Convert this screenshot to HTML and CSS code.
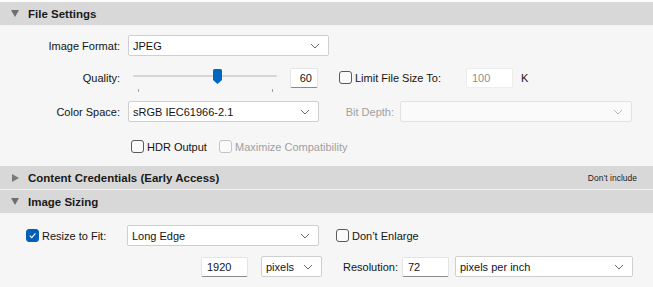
FILE: index.html
```html
<!DOCTYPE html>
<html>
<head>
<meta charset="utf-8">
<link rel="stylesheet" href="styles.css">
</head>
<body>
<div class="panel">
  <div class="hdr first"><span class="tri down"></span><span class="htitle">File Settings</span></div>
  <div class="sec sec1">
    <div class="row r1">
      <span class="lbl">Image Format:</span>
      <div class="sel w-fmt"><span>JPEG</span><svg class="chev" viewBox="0 0 10 6"><path d="M1 1 L5 5 L9 1" /></svg></div>
    </div>
    <div class="row r2">
      <span class="lbl">Quality:</span>
      <div class="slider">
        <div class="track"></div>
        <svg class="thumb" viewBox="0 0 9 15"><path d="M1.5 0 H7.5 Q9 0 9 1.5 V11 L4.5 15 L0 11 V1.5 Q0 0 1.5 0 Z"/></svg>
        <div class="tick t1"></div>
        <div class="tick t2"></div>
      </div>
      <div class="num q">60</div>
      <span class="cb"></span>
      <span class="txt lim">Limit File Size To:</span>
      <div class="num dis sz">100</div>
      <span class="txt k">K</span>
    </div>
    <div class="row r3">
      <span class="lbl">Color Space:</span>
      <div class="sel w-cs"><span>sRGB IEC61966-2.1</span><svg class="chev" viewBox="0 0 10 6"><path d="M1 1 L5 5 L9 1" /></svg></div>
      <span class="txt dim bd">Bit Depth:</span>
      <div class="sel dis w-bd"><span></span><svg class="chev" viewBox="0 0 10 6"><path d="M1 1 L5 5 L9 1" /></svg></div>
    </div>
    <div class="row r4">
      <span class="cb hdrcb"></span>
      <span class="txt hdrt">HDR Output</span>
      <span class="cb dcb"></span>
      <span class="txt dim">Maximize Compatibility</span>
    </div>
  </div>
  <div class="hdr"><span class="tri right"></span><span class="htitle">Content Credentials (Early Access)</span><span class="hnote">Don’t include</span></div>
  <div class="hdr"><span class="tri down"></span><span class="htitle">Image Sizing</span></div>
  <div class="sec sec3">
    <div class="row r5">
      <span class="cb on"><svg viewBox="0 0 12 12"><path d="M3 6.2 L5.2 8.3 L9.2 3.8"/></svg></span>
      <span class="txt rtf">Resize to Fit:</span>
      <div class="sel w-rtf"><span>Long Edge</span><svg class="chev" viewBox="0 0 10 6"><path d="M1 1 L5 5 L9 1" /></svg></div>
      <span class="cb de"></span>
      <span class="txt">Don’t Enlarge</span>
    </div>
    <div class="row r6">
      <div class="num px">1920</div>
      <div class="sel w-px"><span>pixels</span><svg class="chev" viewBox="0 0 10 6"><path d="M1 1 L5 5 L9 1" /></svg></div>
      <span class="txt res">Resolution:</span>
      <div class="num rv">72</div>
      <div class="sel w-ppi"><span>pixels per inch</span><svg class="chev" viewBox="0 0 10 6"><path d="M1 1 L5 5 L9 1" /></svg></div>
    </div>
  </div>
</div>
</body>
</html>
```
FILE: styles.css
```css
* { box-sizing: border-box; }
html, body { margin: 0; padding: 0; }
body {
  background: #f6f6f6;
  font-family: "Liberation Sans", Arial, sans-serif;
  font-size: 11px;
  color: #141414;
  width: 653px;
  height: 287px;
  overflow: hidden;
}
.panel { border-top: 2px solid #fbfbfb; }
.hdr {
  height: 24px;
  background: #d8d8d8;
  display: flex;
  align-items: center;
  border-bottom: 1px solid #f2f2f2;
  position: relative;
}
.tri { width: 0; height: 0; margin-left: 11px; margin-right: 9px; flex: none; }
.tri.down {
  border-left: 4.5px solid transparent;
  border-right: 4.5px solid transparent;
  border-top: 7px solid #6f6f6f;
}
.tri.right {
  margin-left: 12px;
  margin-right: 9px;
  border-top: 4.5px solid transparent;
  border-bottom: 4.5px solid transparent;
  border-left: 7px solid #7a7a7a;
}
.htitle { font-weight: bold; font-size: 11.5px; color: #1a1a1a; }
.hnote { margin-left: auto; margin-right: 16px; font-size: 8.5px; color: #222; }

.sec1 { padding: 9px 0 9px; }
.sec3 { padding: 11px 0 8px; }
.row { display: flex; align-items: center; height: 21px; }
.r2 { margin-top: 11px; }
.r3 { margin-top: 13px; }
.r4 { margin-top: 14px; }
.r6 { margin-top: 10px; }

.lbl { width: 120px; text-align: right; margin-right: 8px; flex: none; }
.txt { white-space: nowrap; flex: none; }
.dim { color: #a0a0a0; }

.sel {
  height: 21px;
  background: #fff;
  border: 1px solid #cfcfcf;
  border-radius: 2px;
  display: flex;
  align-items: center;
  justify-content: space-between;
  padding: 0 8px 0 4px;
  flex: none;
}
.sel.dis { border-color: #e2e2e2; background: #fafafa; }
.sel.dis .chev path { stroke: #b8b8b8; }
.chev { width: 10px; height: 6px; }
.chev path { fill: none; stroke: #6a6a6a; stroke-width: 1; }
.w-fmt { width: 201px; }
.w-cs { width: 191px; }
.w-bd { width: 232px; margin-left: 6px; }
.w-rtf { width: 192px; }
.w-px { width: 61px; margin-left: 13px; }
.w-ppi { width: 178px; margin-left: 6px; }

.num {
  height: 20px;
  background: #fff;
  border: 1px solid #e4e4e4;
  border-bottom-color: #8a8a8a;
  border-radius: 2px;
  display: flex;
  align-items: center;
  padding: 0 5px;
  flex: none;
}
.num.q { width: 28px; justify-content: flex-end; margin-left: 13px; }
.num.dis { border-color: #ececec; color: #909090; }
.num.sz { width: 47px; }
.num.px { width: 47px; margin-left: 201px; }
.num.rv { width: 47px; }
.k { margin-left: 8px; }

.slider { position: relative; width: 144px; height: 21px; margin-left: 5px; flex: none; }
.track { position: absolute; left: 0; right: 0; top: 8px; height: 2px; background: #d6d6d6; border-radius: 1px; }
.thumb { position: absolute; left: 80px; top: 2px; width: 9px; height: 15px; fill: #0067c0; }
.tick { position: absolute; top: 22px; width: 1px; height: 3px; background: #a0a0a0; }
.t1 { left: 5px; }
.t2 { left: 139px; }

.cb {
  width: 13px;
  height: 13px;
  border: 1px solid #5a5a5a;
  border-radius: 3px;
  background: #fafafa;
  margin-right: 3px;
  display: inline-block;
  flex: none;
}
.r2 .cb { margin-left: 21px; }
.lim { width: 111px; }
.hdrcb { margin-left: 131px; }
.hdrt { width: 72px; }
.dcb { border-color: #c4c4c4; }
.cb.on { background: #005fb8; border-color: #005fb8; margin-left: 26px; display: flex; align-items: center; justify-content: center; }
.cb.on svg { width: 11px; height: 11px; }
.cb.on path { fill: none; stroke: #fff; stroke-width: 1.2; }
.rtf { width: 85px; }
.de { margin-left: 17px; }
.res { margin-left: 21px; width: 59px; }
.bd { margin-left: 23px; width: 52px; text-align: right; }
```
